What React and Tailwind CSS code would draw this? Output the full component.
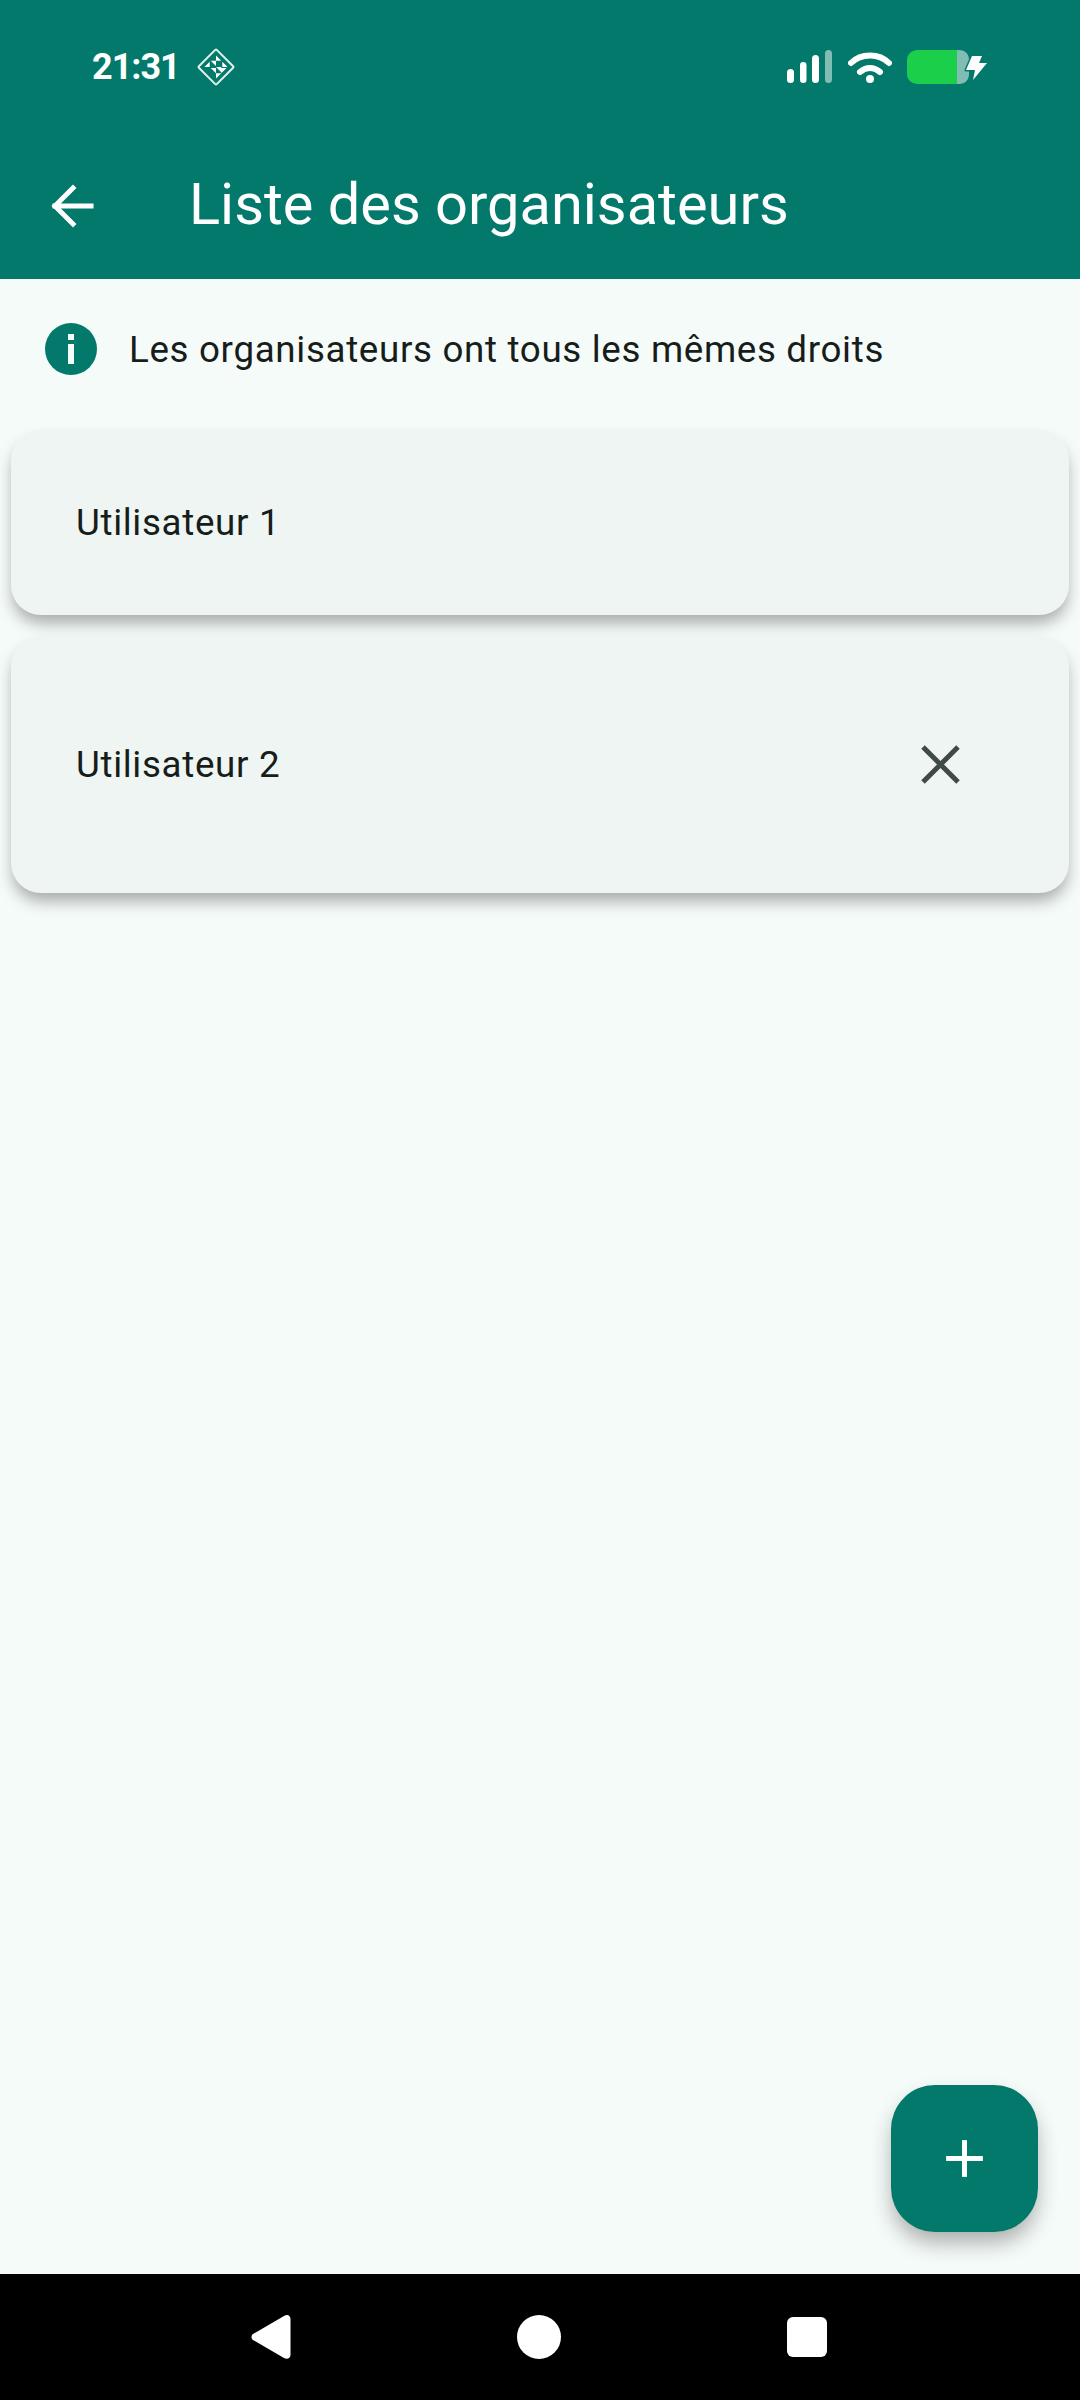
import { ArrowLeft, X, Plus } from 'lucide-react';

const roboto = "font-['Roboto',sans-serif]";

function StatusIcons() {
  return (
    <div className="flex items-center">
      {/* signal */}
      <svg width="46" height="34" viewBox="0 0 46 34" className="mr-[15px]">
        <rect x="0" y="19" width="7" height="14" rx="3.5" fill="#fff" />
        <rect x="13" y="12" width="6.5" height="21" rx="3.25" fill="#fff" />
        <rect x="25" y="5" width="7" height="28" rx="3.5" fill="#fff" />
        <rect x="38" y="0" width="7" height="33" rx="3.5" fill="#fff" fillOpacity="0.5" />
      </svg>
      {/* wifi */}
      <svg width="44" height="34" viewBox="0 0 44 34" className="mr-[15px]">
        <path d="M3 13 C13 3 31 3 41 13" fill="none" stroke="#fff" strokeWidth="6" strokeLinecap="round" />
        <path d="M12 22 C18 16.500 26 16.500 32 22" fill="none" stroke="#fff" strokeWidth="6" strokeLinecap="round" />
        <circle cx="22" cy="29" r="4" fill="#fff" />
      </svg>
      {/* battery + bolt */}
      <svg width="81" height="36" viewBox="0 0 81 36">
        <path d="M50 1 H52 C58 1 62 5 62 11 V25 C62 31 58 35 52 35 H50 Z" fill="#fff" fillOpacity="0.5" />
        <path d="M11 1 H50 V35 H11 C5 35 0 31 0 25 V11 C0 5 5 1 11 1 Z" fill="#1bcf4b" />
        <path d="M65 7 H75 L72 14 H80 L66 31 L68 21 H59 Z" fill="#fff" stroke="#02796b" strokeWidth="3" strokeLinejoin="round" paintOrder="stroke" />
      </svg>
    </div>
  );
}

function DiamondIcon() {
  return (
    <svg width="40" height="40" viewBox="0 0 38 38">
      <rect x="7" y="7" width="24" height="24" rx="1" fill="none" stroke="#dcefea" strokeWidth="2" transform="rotate(45 19 19)" />
      <path d="M19 8 L24 13 H19 Z M14 13 H19 V18 Z M8 19 L13 14 V19 Z M25 14 L30 19 H25 Z M19 19 H24 V24 Z M14 20 H19 V25 Z M19 25 H24 L19 30 Z M24 20 L29 20 L24 25 Z" fill="#fff" />
    </svg>
  );
}

function UserCard({ name, removable }) {
  return (
    <div
      className={`flex items-center justify-between rounded-[30px] bg-[#eff5f2] pl-[65px] pr-[97px] shadow-[0_10px_16px_-2px_rgba(0,0,0,0.32)] ${
        removable ? 'h-[257px]' : 'h-[185px]'
      }`}
    >
      <span className="pt-[1px] text-[36.75px] leading-none tracking-[0.66px] text-[#171d1b]">{name}</span>
      {removable && <X size={63} strokeWidth={1.9} className="text-[#3f4946]" strokeLinecap="square" />}
    </div>
  );
}

export default function App() {
  return (
    <div className={`flex h-[2400px] w-[1080px] flex-col bg-[#f5fbf8] ${roboto}`}>
      {/* Header */}
      <header className="h-[279px] shrink-0 bg-[#02796b] text-white">
        <div className="flex h-[132px] items-center justify-between px-[92px] pt-[2px]">
          <div className="flex items-center gap-[16px]">
            <span className="text-[36px] font-bold leading-none tracking-[-1px]">21:31</span>
            <DiamondIcon />
          </div>
          <StatusIcons />
        </div>
        <div className="flex h-[147px] items-center pl-[42px]">
          <ArrowLeft size={62} strokeWidth={1.9} strokeLinecap="square" strokeLinejoin="miter" />
          <h1 className="ml-[85px] pb-[2px] text-[57.75px] font-normal leading-none">Liste des organisateurs</h1>
        </div>
      </header>

      {/* Content */}
      <main className="flex-1 px-[11px]">
        <div className="flex h-[151px] items-center pb-[12px] pl-[34px]">
          <div className="flex h-[52px] w-[52px] flex-col items-center justify-center gap-[4px] rounded-full bg-[#02796b]">
            <span className="h-[6px] w-[6px] bg-[#f5fbf8]" />
            <span className="h-[20px] w-[6px] bg-[#f5fbf8]" />
          </div>
          <p className="ml-[32px] pt-[4px] text-[36.75px] leading-none tracking-[0.66px] text-[#171d1b]">
            Les organisateurs ont tous les mêmes droits
          </p>
        </div>
        <div className="flex flex-col gap-[21px]">
          <UserCard name="Utilisateur 1" />
          <UserCard name="Utilisateur 2" removable />
        </div>
      </main>

      {/* FAB */}
      <div className="flex justify-end pb-[42px] pr-[42px]">
        <button className="flex h-[147px] w-[147px] items-center justify-center rounded-[44px] bg-[#02796b] text-white shadow-[0_12px_22px_-2px_rgba(0,0,0,0.32)]">
          <Plus size={63} strokeWidth={1.9} strokeLinecap="butt" />
        </button>
      </div>

      {/* Nav bar */}
      <nav className="flex h-[126px] shrink-0 items-center justify-between bg-black pb-[1px] pl-[251px] pr-[253px]">
        <svg width="40" height="46" viewBox="0 0 40 46">
          <path d="M36 1 C38 1 39.500 3 39.500 5 V41 C39.500 44 36 46 33 44 L2 26 C0 25 0 21 2 20 L33 2 C34 1.300 35 1 36 1 Z" fill="#fff" />
        </svg>
        <span className="h-[44px] w-[44px] rounded-full bg-white" />
        <span className="h-[40px] w-[40px] rounded-[6px] bg-white" />
      </nav>
    </div>
  );
}
